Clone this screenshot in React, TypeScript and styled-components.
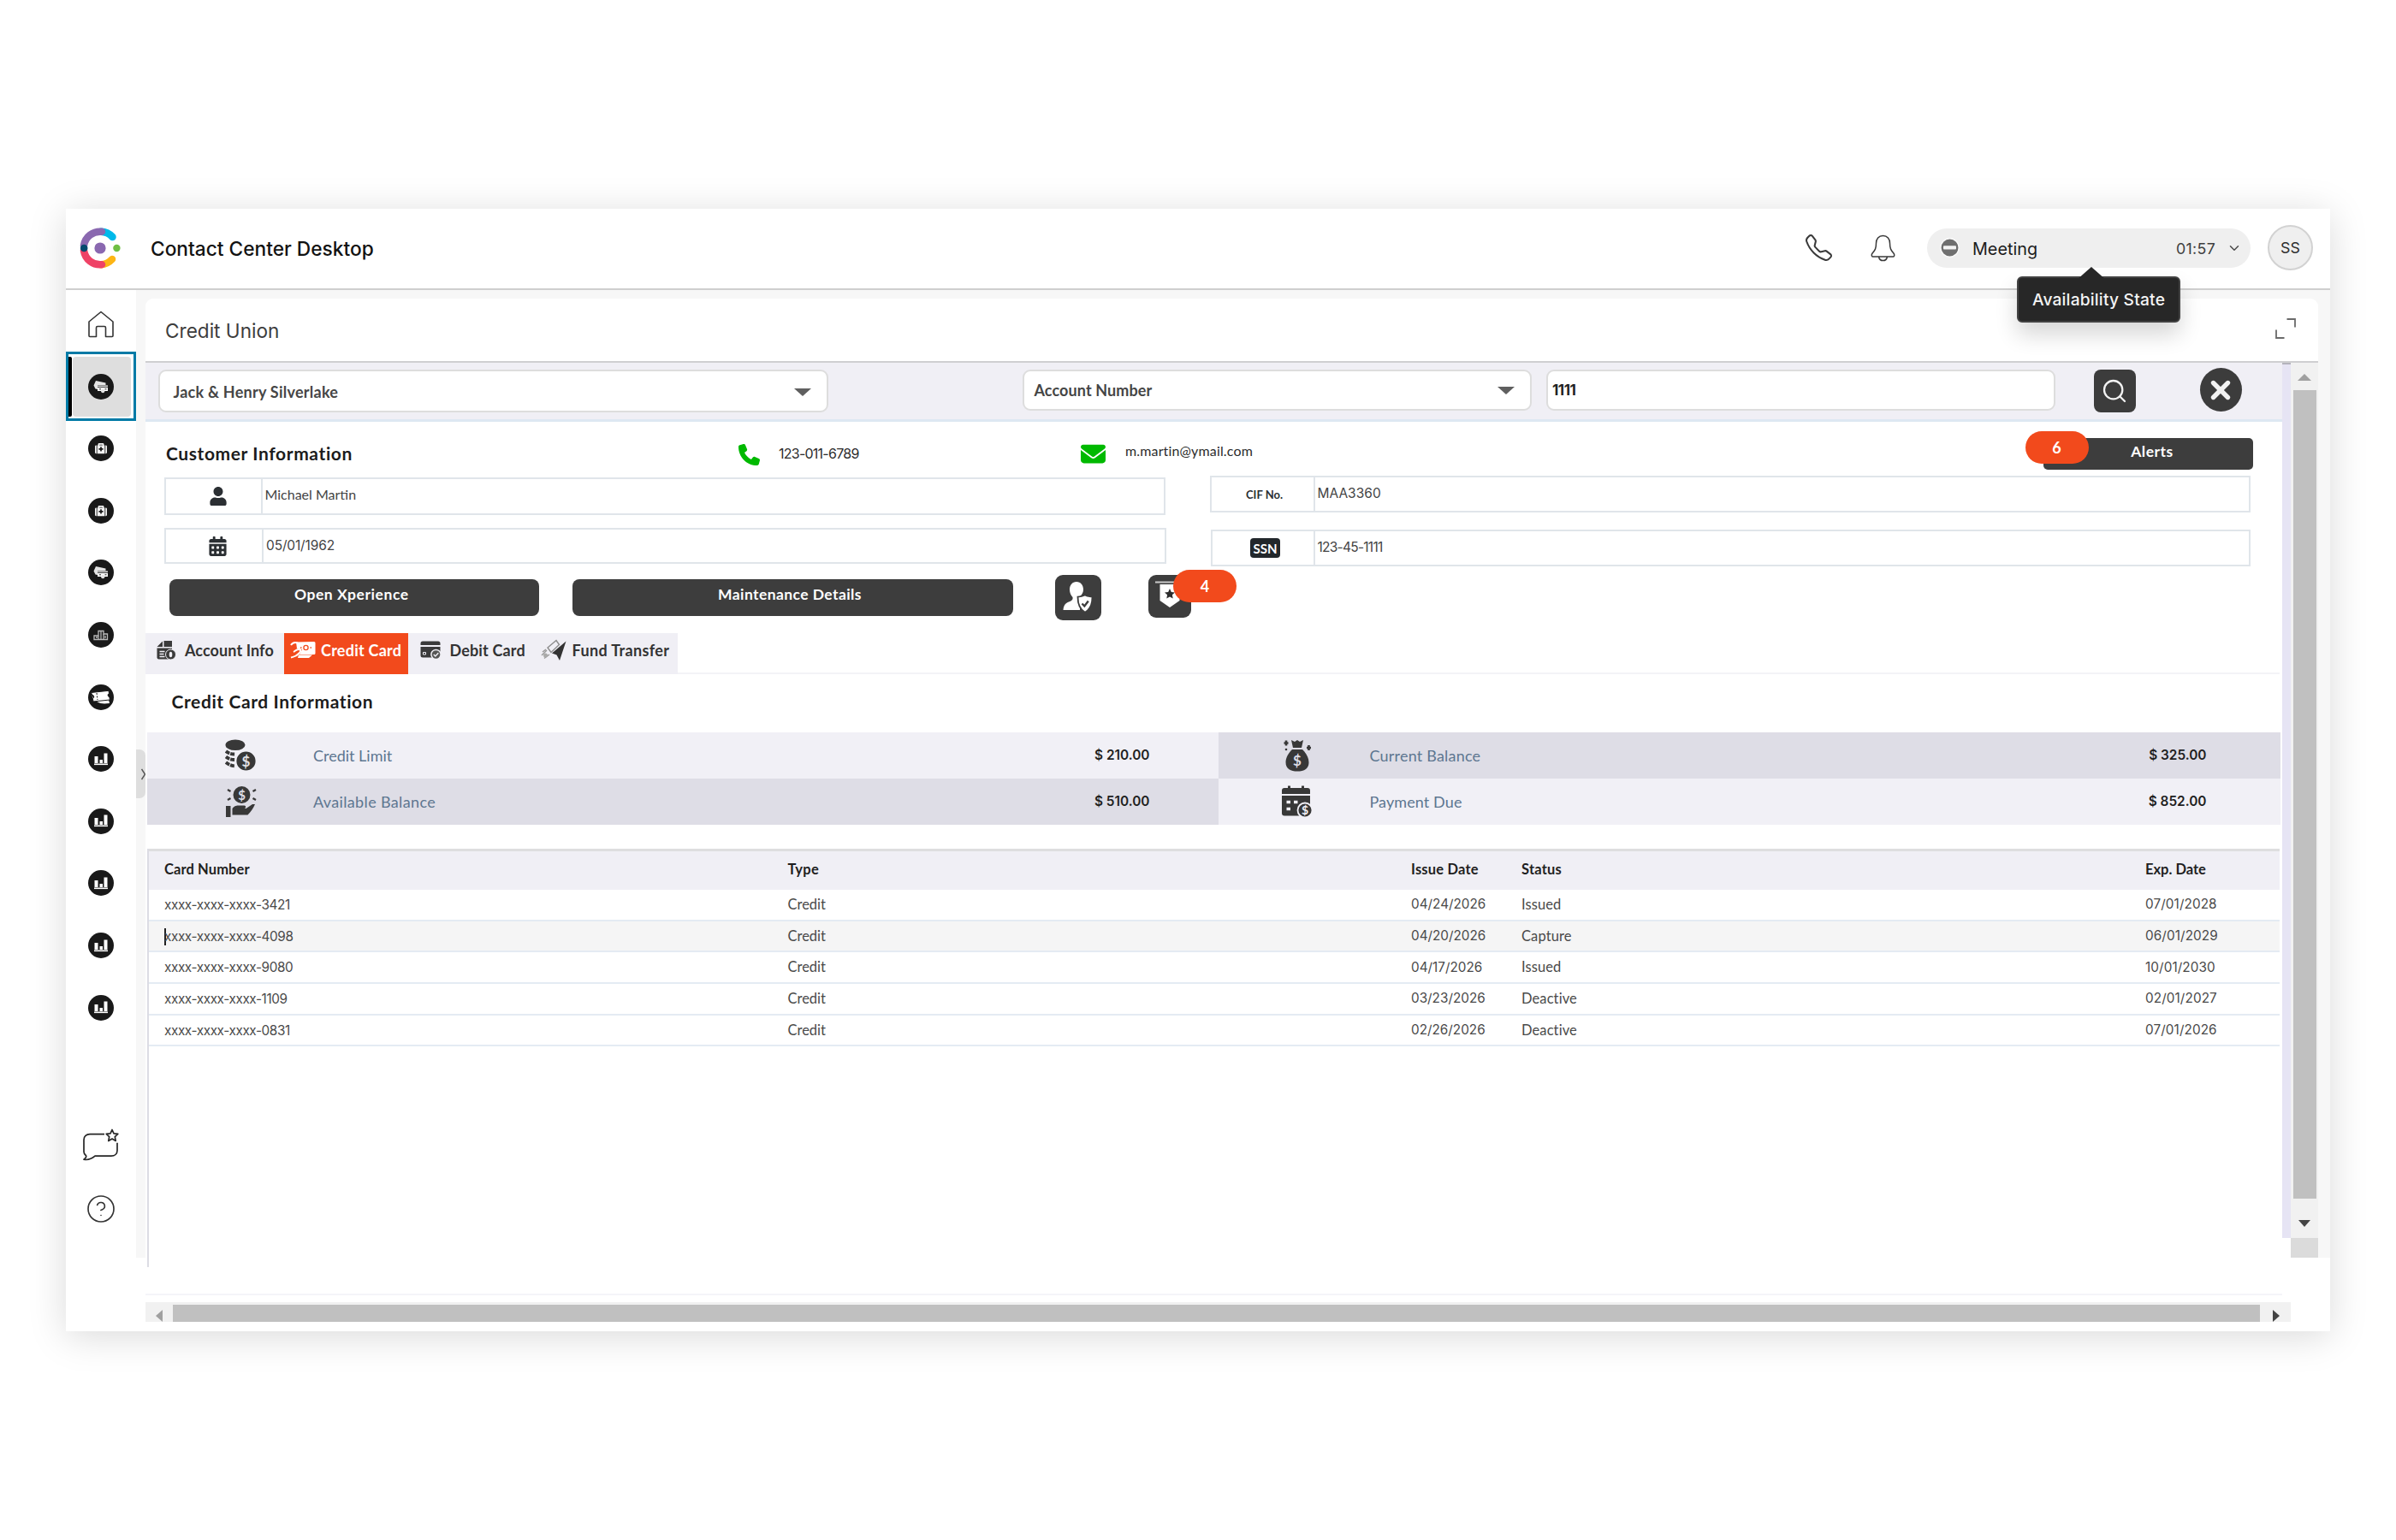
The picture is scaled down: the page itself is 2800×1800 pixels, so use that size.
import { Search, X, CircleHelp, ChevronDown } from 'lucide-react';
import { BsTelephone } from 'react-icons/bs';
import { FaMedkit, FaUser, FaCalendarAlt } from 'react-icons/fa';
import { FaEnvelope, FaPhone } from 'react-icons/fa6';
import styled, { createGlobalStyle } from 'styled-components';

const GlobalStyle = createGlobalStyle`
  * {
    box-sizing: border-box;
  }
  body {
    margin: 0;
    background: #ffffff;
    font-family: Lato, 'Liberation Sans', sans-serif;
    color: #3c3c3c;
  }
  svg {
    display: block;
    flex: none;
  }
`;

const Stage = styled.div`
  width: 2800px;
  height: 1800px;
  padding: 244px 77px;
  overflow: hidden;
`;

const Window = styled.div`
  width: 2646px;
  height: 1312px;
  display: flex;
  flex-direction: column;
  background: #ffffff;
  box-shadow: 0 6px 42px rgba(0, 0, 0, 0.15);
`;

const Label = styled.span<{ $track?: number }>`
  white-space: nowrap;
  letter-spacing: ${(props) => props.$track ?? 0}px;
`;

// Inter has a plain "1", so figures are set in it
const Figures = styled(Label)`
  font-family: Inter, 'Liberation Sans', sans-serif;
`;

/* ---------- top bar ---------- */

const TopBar = styled.header`
  height: 95px;
  flex: none;
  display: flex;
  align-items: center;
  padding: 0 20px 2px 16px;
  border-bottom: 2px solid #cfcfcf;
  font-family: Inter, 'Liberation Sans', sans-serif;
`;

const AppTitle = styled(Label)`
  margin-left: 35px;
  margin-right: auto;
  padding-top: 1px;
  font-size: 22.7px;
  font-weight: 500;
  color: #121212;
`;

const IconSlot = styled.div<{ $right: number }>`
  margin-right: ${(props) => props.$right}px;
  color: #3a3a3a;
`;

const StatePill = styled.div`
  position: relative;
  width: 378px;
  height: 46px;
  margin-right: 20px;
  padding: 0 10px 0 15px;
  display: flex;
  align-items: center;
  border-radius: 23px;
  background: #efefef;
`;

const StateName = styled(Label)`
  margin-left: 15px;
  margin-right: auto;
  padding-top: 2px;
  font-size: 19.8px;
  color: #1b1b1b;
`;

const StateTime = styled(Label)`
  margin-right: 13px;
  padding-top: 1px;
  font-size: 17.8px;
  color: #3f3f3f;
`;

const Avatar = styled.div`
  width: 53px;
  height: 53px;
  display: flex;
  align-items: center;
  justify-content: center;
  border: 2px solid #d2d2d2;
  border-radius: 50%;
  background: #efefef;
  font-size: 17.8px;
  color: #2e2e2e;
`;

const Tooltip = styled.div`
  position: absolute;
  top: 56px;
  left: 105px;
  z-index: 5;
  width: 191px;
  height: 54px;
  display: flex;
  align-items: center;
  justify-content: center;
  border: 2px solid #424242;
  border-radius: 6px;
  background: #272727;
  box-shadow: 0 14px 26px rgba(0, 0, 0, 0.16);
  font-size: 19.2px;
  font-weight: 500;
  color: #f4f4f4;
`;

const TooltipTip = styled.svg`
  position: absolute;
  top: -13px;
  left: 68px;
`;

/* ---------- side bar ---------- */

const Body = styled.div`
  flex: 1;
  display: flex;
  align-items: flex-start;
`;

const SideBar = styled.nav`
  width: 82px;
  height: 1217px;
  display: flex;
  flex-direction: column;
  align-items: center;
  padding-top: 24px;
`;

const HomeSlot = styled.div`
  height: 48px;
`;

const NavItem = styled.div`
  width: 82px;
  height: 72.6px;
  display: flex;
  align-items: center;
  justify-content: center;
`;

const SelectedItem = styled.div`
  width: 82px;
  height: 81px;
  margin-bottom: -4px;
  padding: 2px 3px 2px 0;
  display: flex;
  align-items: center;
  border: 3px solid #007aa6;
`;

const SelectedMark = styled.div`
  width: 4px;
  height: 70px;
  background: #000000;
  border-radius: 0 2px 2px 0;
`;

const SelectedTile = styled.div`
  width: 70px;
  height: 70px;
  margin-left: 1px;
  padding-right: 2px;
  display: flex;
  align-items: center;
  justify-content: center;
  border-radius: 4px;
  background: #dedede;
`;

const Bubble = styled.div`
  width: 30px;
  height: 30px;
  display: flex;
  align-items: center;
  justify-content: center;
  border-radius: 50%;
  background: #191919;
  color: #f3f3f3;
  font-size: 14px;
`;

const SideFooter = styled.div`
  margin-top: auto;
  margin-bottom: 125px;
  display: flex;
  flex-direction: column;
  align-items: center;
  gap: 36px;
`;

const Gutter = styled.div<{ $width: number }>`
  width: ${(props) => props.$width}px;
  height: 1131px;
  padding-top: 537px;
  background: #f7f7f7;
`;

const Handle = styled.div`
  height: 57px;
  display: flex;
  align-items: center;
  justify-content: flex-end;
  border-radius: 0 7px 7px 0;
  background: #dedede;
`;

/* ---------- panel ---------- */

const PanelWrap = styled.div`
  width: 2539px;
  padding-top: 10px;
  background: linear-gradient(#f7f7f7 24px, #ffffff 24px);
`;

const Panel = styled.section`
  display: flex;
  flex-direction: column;
  border-radius: 9px 9px 0 0;
  background: #ffffff;
`;

const PanelTitle = styled.div`
  height: 75px;
  padding: 0 25px 3px 23px;
  display: flex;
  align-items: center;
  justify-content: space-between;
  border-bottom: 2px solid #cfcfd1;
  font-family: Inter, 'Liberation Sans', sans-serif;
  font-size: 22.6px;
  color: #3d3d3d;
`;

const PanelName = styled(Label)`
  padding-top: 4px;
`;

const Frame = styled.div`
  display: flex;
`;

const Page = styled.div`
  width: 2497px;
  height: 1098px;
  display: flex;
  flex-direction: column;
`;

const Strip = styled.div`
  width: 10px;
  height: 1023px;
  background: #e6e4f4;
  border-top: 2px solid #b4b3bc;
`;

const VerticalScroll = styled.div`
  width: 32px;
  height: 1046px;
  padding-top: 13px;
  display: flex;
  flex-direction: column;
  align-items: center;
  background: #f1f1f1;
  border-bottom: 23px solid #dbdbdb;
`;

const VerticalThumb = styled.div`
  width: 27px;
  height: 945px;
  margin: 11px 0 25px;
  background: #c0c0c0;
`;

const HorizontalScroll = styled.div`
  width: 2507px;
  height: 23px;
  padding-left: 12px;
  display: flex;
  align-items: flex-end;
  background: #f1f1f1;
`;

const HorizontalThumb = styled.div`
  width: 2438.5px;
  height: 20px;
  margin: 0 15px 0 12px;
  background: #c0c0c0;
`;

/* ---------- search band ---------- */

const SearchBand = styled.div`
  height: 69px;
  padding: 8px 0 0 14.5px;
  display: flex;
  align-items: flex-start;
  background: #f0eff5;
  border-bottom: 3px solid #dde8f2;
`;

const Box = styled.div<{ $width: number; $height: number; $left: number }>`
  width: ${(props) => props.$width}px;
  height: ${(props) => props.$height}px;
  margin-left: ${(props) => props.$left}px;
  display: flex;
  align-items: center;
  justify-content: space-between;
  border: 2px solid #dddddd;
  border-radius: 9px;
  background: #ffffff;
  font-size: 18px;
  font-weight: 700;
  color: #454545;
`;

const SelectBox = styled(Box)`
  padding: 0 18px 0 12px;
`;

const WideSelectBox = styled(Box)`
  padding: 2px 18px 0 16px;
`;

const TextBox = styled(Box)`
  padding: 0 5px;
  font-size: 17px;
  color: #222222;
`;

const SquareButton = styled.div`
  width: 49px;
  height: 50px;
  margin-left: 44.5px;
  display: flex;
  align-items: center;
  justify-content: center;
  border-radius: 8px;
  background: #3c3c3c;
  color: #f2f2f2;
`;

const RoundButton = styled(SquareButton)`
  width: 49px;
  height: 51px;
  margin-left: 75px;
  margin-top: -2px;
  border-radius: 50%;
`;

/* ---------- customer ---------- */

const ContactRow = styled.div`
  height: 63px;
  padding: 0 34px 0 24px;
  display: grid;
  grid-template-columns: 669px 400px 1fr 267px;
  align-items: start;
`;

const Heading = styled(Label)`
  font-size: 21px;
  font-weight: 700;
  color: #1c1c1c;
`;

const CustomerHeading = styled(Heading)`
  padding-top: 24px;
`;

const Contact = styled.div<{ $top: number; $gap: number }>`
  padding-top: ${(props) => props.$top}px;
  display: flex;
  align-items: flex-start;
  gap: ${(props) => props.$gap}px;
  font-size: 16px;
  line-height: 22px;
  color: #2c2c2c;
  svg {
    color: #00b900;
  }
`;

const AlertsButton = styled.div`
  position: relative;
  width: 245px;
  height: 37px;
  margin-top: 19px;
  margin-left: 22px;
  padding: 0 0 7px 9px;
  display: flex;
  align-items: center;
  justify-content: center;
  border-radius: 5px;
  background: #3d3d3d;
  color: #ffffff;
  font-size: 17.5px;
  font-weight: 700;
`;

const CountBadge = styled.div<{ $left: number; $top: number }>`
  position: absolute;
  left: ${(props) => props.$left}px;
  top: ${(props) => props.$top}px;
  width: 74px;
  height: 38px;
  display: flex;
  align-items: center;
  justify-content: center;
  border-radius: 19px;
  background: #f24a1c;
  color: #ffffff;
  font-size: 18px;
  font-weight: 700;
`;

const Fields = styled.div`
  height: 116px;
  padding-left: 22px;
  display: flex;
  gap: 50.5px;
`;

const FieldColumn = styled.div<{ $top: number; $gap: number; $align?: string }>`
  padding-top: ${(props) => props.$top}px;
  display: flex;
  flex-direction: column;
  align-items: ${(props) => props.$align ?? 'flex-end'};
  gap: ${(props) => props.$gap}px;
`;

const Field = styled.div<{ $width: number; $height: number }>`
  width: ${(props) => props.$width}px;
  height: ${(props) => props.$height}px;
  display: flex;
  border: 2px solid #e0e5ea;
`;

const FieldIcon = styled.div<{ $width: number; $left: number }>`
  width: ${(props) => props.$width}px;
  padding-left: ${(props) => props.$left}px;
  display: flex;
  align-items: center;
  border-right: 2px solid #e0e5ea;
  color: #2b2f33;
  font-size: 13px;
  font-weight: 700;
`;

const FieldValue = styled(Label)`
  padding: 0 0 5px 3px;
  align-self: center;
  font-size: 16px;
  color: #444444;
`;

const FieldFigures = styled(FieldValue)`
  padding-bottom: 2px;
  font-family: Inter, 'Liberation Sans', sans-serif;
  font-size: 15.5px;
`;

const SsnBadge = styled.div`
  width: 35px;
  height: 23px;
  display: flex;
  align-items: center;
  justify-content: center;
  border-radius: 4px;
  background: #22272b;
  color: #ffffff;
  font-size: 15px;
`;

const Actions = styled.div`
  height: 68px;
  padding-left: 27.5px;
  display: flex;
  align-items: flex-start;
`;

const ActionButton = styled.div<{ $width: number; $right: number }>`
  width: ${(props) => props.$width}px;
  height: 43px;
  margin: 5px ${(props) => props.$right}px 0 0;
  padding: 0 6px 8px 0;
  display: flex;
  align-items: center;
  justify-content: center;
  border-radius: 8px;
  background: #3d3d3d;
  color: #ffffff;
  font-size: 17.5px;
  font-weight: 700;
`;

const IconButton = styled.div<{ $width: number; $height: number }>`
  position: relative;
  width: ${(props) => props.$width}px;
  height: ${(props) => props.$height}px;
  margin-right: 54.5px;
  padding-bottom: 2px;
  display: flex;
  align-items: center;
  justify-content: center;
  border-radius: 9px;
  background: #3d3d3d;
`;

/* ---------- tabs ---------- */

const Tabs = styled.div`
  height: 48px;
  display: flex;
  margin-right: 3px;
  border-bottom: 2px solid #f3f3f7;
`;

const Tab = styled.div<{ $active?: boolean; $width: number; $left: number; $gap: number }>`
  width: ${(props) => props.$width}px;
  height: 48px;
  padding: 0 0 9px ${(props) => props.$left}px;
  display: flex;
  align-items: center;
  gap: ${(props) => props.$gap}px;
  background: ${(props) => (props.$active ? '#f24a1c' : '#f0eff5')};
  color: ${(props) => (props.$active ? '#ffffff' : '#333333')};
  font-size: 18px;
  font-weight: 700;
`;

const CardHeading = styled(Heading)`
  height: 68px;
  padding-left: 30.5px;
  line-height: 64px;
`;

/* ---------- summary ---------- */

const Summary = styled.div`
  width: 2493px;
  margin: 0 0 28px 1.5px;
  display: grid;
  grid-template-columns: 1252px 1241px;
  grid-template-rows: 54px 54px;
`;

const SummaryCell = styled.div<{ $dark?: boolean; $side: 'left' | 'right' }>`
  padding-right: ${(props) => (props.$side === 'left' ? 80 : 86)}px;
  display: grid;
  grid-template-columns: ${(props) => (props.$side === 'left' ? '91px 103.5px' : '73px 104px')} 1fr auto;
  align-items: center;
  background: ${(props) => (props.$dark ? '#dedde6' : '#f1f0f6')};
`;

const SummaryLabel = styled(Label)`
  grid-column: 3;
  font-size: 18px;
  color: #5d7690;
`;

const SummaryIcon = styled.div`
  grid-column: 2;
`;

const SummaryValue = styled(Figures)`
  padding-bottom: 2px;
  font-size: 15.4px;
  font-weight: 600;
  color: #1f1f1f;
`;

/* ---------- table ---------- */

const Table = styled.div`
  width: 2492px;
  height: 489px;
  margin-left: 2px;
  border-left: 2px solid #dcdce4;
`;

const TableRow = styled.div<{ $hover?: boolean }>`
  height: 36.7px;
  padding: 0 0 1px 18px;
  display: grid;
  grid-template-columns: 728.5px 728.5px 129px 729px 1fr;
  align-items: center;
  border-bottom: 2px solid #e4ebf3;
  background: ${(props) => (props.$hover ? '#f5f5f5' : '#ffffff')};
  font-size: 16.5px;
  color: #4a4a4a;
`;

const TableHead = styled(TableRow)`
  height: 48px;
  padding-bottom: 4px;
  border-top: 3px solid #dededf;
  border-bottom: none;
  background: #f0eff5;
  font-weight: 700;
  color: #1f1f1f;
`;

const RowFigures = styled(Figures)`
  font-size: 15.3px;
`;

const Caret = styled.span`
  display: inline-block;
  width: 2px;
  height: 20px;
  margin: 0 -2px -5px 0;
  background: #222222;
`;

const Rule = styled.div`
  height: 2px;
  margin-top: 31px;
  background: #f4f4f9;
`;

/* ---------- drawings ---------- */

const Triangle = ({ w, h, points, fill }: { w: number; h: number; points: string; fill: string }) => (
  <svg width={w} height={h}>
    <polygon points={points} fill={fill} />
  </svg>
);

const Logo = () => (
  <svg width="48" height="48" viewBox="0 0 48 48" fill="none" strokeWidth="8.5" strokeLinecap="round">
    <path d="M25 4.8A19.2 19.2 0 0 1 38.5 11" stroke="#00b9ea" />
    <path d="M25 43.2A19.2 19.2 0 0 0 38 37" stroke="#fdb515" />
    <path d="M5 27A19.2 19.2 0 0 0 26 43.2" stroke="#ef4266" />
    <path d="M5 21A19.2 19.2 0 0 1 26 4.8" stroke="#8a68b0" />
    <circle cx="5.2" cy="24" r="4.3" fill="#04496e" />
    <circle cx="43.4" cy="24" r="4.2" fill="#6fbf44" />
    <circle cx="24" cy="24" r="6.6" fill="#8a68b0" />
  </svg>
);

const BellIcon = () => (
  <svg width="31" height="32" viewBox="0 0 31 32" fill="none" stroke="currentColor" strokeWidth="1.5" strokeLinejoin="round">
    <path d="M15.5 1.5c-5 0-8 3.8-8 8.8 0 6.2-1.2 8-4.6 12-.9 1.2-.9 3.7.6 3.7h24c1.5 0 1.5-2.5.6-3.7-3.4-4-4.6-5.8-4.6-12 0-5-3-8.8-8-8.8z" />
    <path d="M10.5 26c.6 3 2.6 4.6 5 4.6s4.4-1.6 5-4.6" />
  </svg>
);

const HomeIcon = () => (
  <svg width="32" height="32" viewBox="0 0 32 32" fill="none" stroke="#333" strokeWidth="1.6" strokeLinejoin="round">
    <path d="M16 1.5L30 13v16.5a1 1 0 0 1-1 1h-7.5V20a1.5 1.5 0 0 0-1.5-1.5h-8a1.5 1.5 0 0 0-1.5 1.5v10.5H3a1 1 0 0 1-1-1V13z" />
  </svg>
);

const MinusIcon = () => (
  <svg width="23" height="23" viewBox="0 0 23 23">
    <circle cx="11.5" cy="11.5" r="10.7" fill="#707070" stroke="#fafafa" strokeWidth="1.5" />
    <rect x="4" y="9.3" width="15" height="4.2" rx="1" fill="#f4f4f4" />
  </svg>
);

const ExpandIcon = () => (
  <svg width="26" height="26" viewBox="0 0 26 26" fill="none" stroke="#6a6a6a" strokeWidth="1.8">
    <path d="M14.5 2H24v9.5M2 14.5V24h9.5" />
  </svg>
);

const FeedbackIcon = () => (
  <svg width="44" height="40" viewBox="0 0 44 40" fill="none" stroke="#262626" strokeWidth="1.7" strokeLinejoin="round">
    <path d="M26 6.7H9c-4 0-7 2.5-7 6.5v14c0 2 1.300 3.600 2.500 4.500.8 1.500-.4 3-2.500 4.500 5 1 9-.5 13-4h19c4 0 7-2.500 7-6.500v-9" />
    <path d="M35 1.500l2 4.300 4.800.6-3.500 3.300.9 4.800-4.200-2.400-4.200 2.400.9-4.800-3.500-3.300 4.800-.6z" />
  </svg>
);

const CardsGlyph = () => (
  <svg width="20" height="18" viewBox="0 0 20 18">
    <path d="M1.500 7.500L4 2l11.500 2.500V7H6v5l-2.500-.5z" fill="#e4e4e4" />
    <path d="M6 7.500h12v6.500H6z" fill="#ffffff" />
    <path d="M6 9.300h12M8 11.800h2M14.500 11.800h2" stroke="#191919" strokeWidth="1" />
    <circle cx="12.2" cy="14.2" r="2.100" fill="#e4e4e4" />
  </svg>
);

const PodiumGlyph = () => (
  <svg width="19" height="14" viewBox="0 0 19 14" fill="none" stroke="#b9b9b9" strokeWidth="1.3">
    <path d="M1 12.5V8h5V2.500h6V6h4.500v6.500z" />
    <path d="M6 8v4M9 3v9M12 6v6M3 10h2M14 8v3" />
  </svg>
);

const TicketGlyph = () => (
  <svg width="26" height="22" viewBox="0 0 26 22">
    <path d="M2 8c5 11 12 11 21 10l-1-4-18-1z" fill="#fff" />
    <path d="M1.500 5.500L22 3.300l.5 3.200a2.200 2.200 0 0 0 .4 4.200l.5 3.300L4 16l-.6-3.500a2.200 2.200 0 0 0-.7-4.200z" fill="#fff" stroke="#191919" strokeWidth="1" />
    <path d="M8 6l1 8" stroke="#191919" strokeDasharray="2 1.5" />
  </svg>
);

const ChartGlyph = () => (
  <svg width="18" height="17" viewBox="0 0 18 17" fill="#fff">
    <rect x="1.5" y="5" width="4" height="8" />
    <rect x="7.5" y="9" width="3.5" height="4" />
    <rect x="12.5" y="1.5" width="4" height="11.5" />
    <rect x="1" y="13.5" width="16" height="1.6" />
  </svg>
);

const UserShieldIcon = () => (
  <svg width="36" height="42" viewBox="0 0 36 42">
    <path d="M16 3c-5 0-8 4-8 9 0 4 1.500 7 3.500 9 .5 3-1 4-4.500 5.500C3.500 28 1 30 .5 36H20V20c2.500-2 4-4.500 4-8 0-5-3-9-8-9z" fill="#fff" />
    <path d="M26 18.500c3 1.500 5.500 2 8.500 2.200 0 8-1.500 14-8.500 18-7-4-8.500-10-8.500-18 3-.2 5.500-.7 8.500-2.200z" fill="#fff" stroke="#3d3d3d" strokeWidth="1.8" />
    <path d="M22.500 28.500l2.800 3 4.500-6" fill="none" stroke="#3d3d3d" strokeWidth="2.4" />
  </svg>
);

const PennantIcon = () => (
  <svg width="36" height="42" viewBox="0 0 36 42">
    <path d="M1 5.500h34" stroke="#c9c9c9" strokeWidth="2" />
    <path d="M6.500 8h23v19L18 35 6.500 27z" fill="#fff" />
    <path d="M18 13l1.800 3.900 4.200.5-3.100 2.900.8 4.200-3.700-2.100-3.700 2.100.8-4.200-3.100-2.900 4.200-.5z" fill="#2d2d2d" />
  </svg>
);

const AccountIcon = () => (
  <svg width="24" height="24" viewBox="0 0 24 24" fill="#3a3a3a">
    <path d="M1.500 8L8 1.500V8zM9.500 1h9.500v7H9.500z" />
    <path d="M1.500 9.500H19V22.500H3.500a2 2 0 0 1-2-2z" />
    <path d="M4.500 13.500h6M4.500 16.500h5M4.500 19.500h6" stroke="#f0eff5" strokeWidth="1.3" />
    <circle cx="17.5" cy="17" r="6" stroke="#f0eff5" strokeWidth="1" />
    <ellipse cx="17.5" cy="17" rx="1.8" ry="3.2" fill="#f0eff5" />
  </svg>
);

const CashIcon = () => (
  <svg width="30" height="24" viewBox="0 0 30 24">
    <path d="M7 2.500L28 2a1.500 1.500 0 0 1 1.500 1.500v12A1.500 1.500 0 0 1 28 17H11l3-6-6-1z" fill="#fff" />
    <path d="M1 6C3 2.500 6 2.500 9 3.500M1 20.500c4-1 6-1 9-4.500 3-3 3-5 0-5s-4 2-6 3" fill="none" stroke="#fff" strokeWidth="2" />
    <path d="M10 17.500h16l-4 3.500H9z" fill="#fff" />
    <circle cx="18.5" cy="9" r="2.6" fill="none" stroke="#f24a1c" strokeWidth="1.3" />
    <path d="M12 9h1.500M23.500 9H25" stroke="#f24a1c" strokeWidth="1.6" />
  </svg>
);

const DebitIcon = () => (
  <svg width="25" height="24" viewBox="0 0 25 24">
    <path d="M3 1.500h18A2.500 2.500 0 0 1 23.500 4v2H.5V4A2.500 2.500 0 0 1 3 1.500zM.5 8h23v10a2.500 2.500 0 0 1-2.500 2.500H3A2.500 2.500 0 0 1 .5 18z" fill="#3a3a3a" />
    <path d="M3.500 14.500h3V17h-3z" stroke="#f0eff5" strokeWidth="1" fill="none" />
    <circle cx="18.5" cy="17" r="5.6" fill="#555" stroke="#f0eff5" strokeWidth="1.5" />
    <path d="M15.800 17l2 2 3.500-3.700" fill="none" stroke="#f0eff5" strokeWidth="1.5" />
  </svg>
);

const TransferIcon = () => (
  <svg width="31" height="26" viewBox="0 0 31 26">
    <path d="M29.500 2.500L13 16.500l5.500 2 3.500 6.500z" fill="#333" />
    <path d="M8 10l10-8.500 3.500 5L12 15.500z" fill="none" stroke="#8c8c8c" strokeWidth="1.4" />
    <path d="M1 19l6-6M4 22.500l6-4.500M2 15l4-3" stroke="#999" strokeWidth="1.4" />
    <circle cx="5.5" cy="19" r="2.5" fill="#aaa" />
  </svg>
);

const Dollar = ({ x, y, size, fill }: { x: number; y: number; size: number; fill: string }) => (
  <text x={x} y={y} fontSize={size} fill={fill} fontFamily="Lato, sans-serif" fontWeight="700" textAnchor="middle">
    $
  </text>
);

const CoinsIcon = () => (
  <svg width="37" height="38" viewBox="0 0 37 38">
    <ellipse cx="12" cy="6.8" rx="11.5" ry="6.3" fill="#383838" />
    <path d="M1 14c3 2.500 6 3.500 11 3.500M1 20.500c3 2.500 6 3.500 11 3.500M1 27c3 2.500 6 4 11 4.500" fill="none" stroke="#383838" strokeWidth="3.8" strokeDasharray="5 1" />
    <circle cx="24.5" cy="25.5" r="12" fill="#383838" stroke="#f1f0f6" strokeWidth="1.8" />
    <Dollar x={24.5} y={31.5} size={17} fill="#e4e4e8" />
  </svg>
);

const HandIcon = () => (
  <svg width="37" height="38" viewBox="0 0 37 38">
    <circle cx="19.5" cy="11" r="10" fill="#383838" />
    <Dollar x={19.5} y={16.5} size={15} fill="#dedde6" />
    <path d="M3 5l3.500 2M3 17l3.500-2M36 5l-3.500 2M36 17l-3.500-2" stroke="#383838" strokeWidth="2.2" />
    <rect x="1" y="24" width="5.5" height="13" fill="#383838" />
    <path d="M8.500 27c3-3.500 5-3.500 8-3.500h6c2 0 2.500 3 0 3.500h2L32 22h3c-2 5-5 9-8.500 12.500h-18z" fill="#383838" />
  </svg>
);

const BagIcon = () => (
  <svg width="37" height="38" viewBox="0 0 37 38">
    <path d="M12 1l4 2 3-2 3 2 4-2-2 9H14z" fill="#383838" />
    <path d="M13 12h12c4 4 7.500 9 7.500 15 0 8-6 10.500-13.500 10.500S5.500 35 5.500 27c0-6 3.500-11 7.500-15z" fill="#383838" />
    <path d="M6 1.500v6M3.500 4.500h5M32.500 7v6M30 10h5" stroke="#383838" strokeWidth="2.6" />
    <circle cx="6" cy="12" r="1.3" fill="#383838" />
    <Dollar x={19} y={31} size={17} fill="#dedde6" />
  </svg>
);

const DueIcon = () => (
  <svg width="37" height="38" viewBox="0 0 37 38">
    <path d="M1 10V6a3 3 0 0 1 3-3h4V.5h3V3h13V.5h3V3h4a3 3 0 0 1 3 3v4z" fill="#383838" />
    <path d="M1 12h33v21.500a2 2 0 0 1-2 2H4a3 3 0 0 1-3-3z" fill="#383838" />
    <path d="M6.500 19.500H11M15 19.500h4.500M6.500 27.500H11" stroke="#f1f0f6" strokeWidth="3.6" />
    <circle cx="28" cy="29" r="8.5" fill="#383838" stroke="#f1f0f6" strokeWidth="1.8" />
    <Dollar x={28} y={34} size={14} fill="#f1f0f6" />
  </svg>
);

/* ---------- data ---------- */

const navGlyphs = [
  <FaMedkit />,
  <FaMedkit />,
  <CardsGlyph />,
  <PodiumGlyph />,
  <TicketGlyph />,
  <ChartGlyph />,
  <ChartGlyph />,
  <ChartGlyph />,
  <ChartGlyph />,
  <ChartGlyph />,
];

interface CardRow {
  number: string;
  issued: string;
  status: string;
  expires: string;
}

const cards: CardRow[] = [
  { number: 'xxxx-xxxx-xxxx-3421', issued: '04/24/2026', status: 'Issued', expires: '07/01/2028' },
  { number: 'xxxx-xxxx-xxxx-4098', issued: '04/20/2026', status: 'Capture', expires: '06/01/2029' },
  { number: 'xxxx-xxxx-xxxx-9080', issued: '04/17/2026', status: 'Issued', expires: '10/01/2030' },
  { number: 'xxxx-xxxx-xxxx-1109', issued: '03/23/2026', status: 'Deactive', expires: '02/01/2027' },
  { number: 'xxxx-xxxx-xxxx-0831', issued: '02/26/2026', status: 'Deactive', expires: '07/01/2026' },
];

function App() {
  return (
    <Stage>
      <GlobalStyle />
      <Window>
        <TopBar>
          <Logo />
          <AppTitle>Contact Center Desktop</AppTitle>
          <IconSlot $right={44}>
            <BsTelephone size={31} />
          </IconSlot>
          <IconSlot $right={36}>
            <BellIcon />
          </IconSlot>
          <StatePill>
            <MinusIcon />
            <StateName>Meeting</StateName>
            <StateTime $track={0.3}>01:57</StateTime>
            <ChevronDown size={18} strokeWidth={2} color="#4a4a4a" />
            <Tooltip>
              <TooltipTip width="34" height="15">
                <path d="M0 15L17 0l17 15z" fill="#272727" />
              </TooltipTip>
              <Label $track={0.2}>Availability State</Label>
            </Tooltip>
          </StatePill>
          <Avatar>
            <Label>SS</Label>
          </Avatar>
        </TopBar>
        <Body>
          <SideBar>
            <HomeSlot>
              <HomeIcon />
            </HomeSlot>
            <SelectedItem>
              <SelectedMark />
              <SelectedTile>
                <Bubble>
                  <CardsGlyph />
                </Bubble>
              </SelectedTile>
            </SelectedItem>
            {navGlyphs.map((glyph, i) => (
              <NavItem key={i}>
                <Bubble>{glyph}</Bubble>
              </NavItem>
            ))}
            <SideFooter>
              <FeedbackIcon />
              <CircleHelp size={36} strokeWidth={1.1} color="#333" />
            </SideFooter>
          </SideBar>
          <Gutter $width={11}>
            <Handle>
              <svg width="5" height="14" fill="none" stroke="#555" strokeWidth="1.5">
                <path d="M.5 1l4 6-4 6" />
              </svg>
            </Handle>
          </Gutter>
          <PanelWrap>
            <Panel>
              <PanelTitle>
                <PanelName>Credit Union</PanelName>
                <ExpandIcon />
              </PanelTitle>
              <Frame>
                <Page>
                  <SearchBand>
                    <WideSelectBox $width={783} $height={50} $left={0}>
                      <Label $track={0.25}>Jack &amp; Henry Silverlake</Label>
                      <Triangle w={20} h={9} points="0,0 20,0 10,9" fill="#5f5f5f" />
                    </WideSelectBox>
                    <SelectBox $width={595} $height={48} $left={227}>
                      <Label $track={0.1}>Account Number</Label>
                      <Triangle w={20} h={9} points="0,0 20,0 10,9" fill="#5f5f5f" />
                    </SelectBox>
                    <TextBox $width={595} $height={48} $left={17.5}>
                      <Figures $track={-0.5}>1111</Figures>
                    </TextBox>
                    <SquareButton>
                      <Search size={32} strokeWidth={1.7} />
                    </SquareButton>
                    <RoundButton>
                      <X size={34} strokeWidth={3.8} />
                    </RoundButton>
                  </SearchBand>
                  <ContactRow>
                    <CustomerHeading $track={0.6}>Customer Information</CustomerHeading>
                    <Contact $top={26} $gap={22}>
                      <FaPhone size={25} />
                      <Figures $track={-0.75}>123-011-6789</Figures>
                    </Contact>
                    <Contact $top={23} $gap={23}>
                      <FaEnvelope size={29} />
                      <Label $track={0.15}>m.martin@ymail.com</Label>
                    </Contact>
                    <AlertsButton>
                      <Label $track={0.5}>Alerts</Label>
                      <CountBadge $left={-21.5} $top={-8}>
                        6
                      </CountBadge>
                    </AlertsButton>
                  </ContactRow>
                  <Fields>
                    <FieldColumn $top={2} $gap={15} $align="flex-start">
                      <Field $width={1170} $height={44}>
                        <FieldIcon $width={112.5} $left={50}>
                          <FaUser size={22} />
                        </FieldIcon>
                        <FieldValue>Michael Martin</FieldValue>
                      </Field>
                      <Field $width={1171} $height={42}>
                        <FieldIcon $width={114} $left={48.5}>
                          <FaCalendarAlt size={23} />
                        </FieldIcon>
                        <FieldFigures $track={-0.15}>05/01/1962</FieldFigures>
                      </Field>
                    </FieldColumn>
                    <FieldColumn $top={0} $gap={20}>
                      <Field $width={1216} $height={43}>
                        <FieldIcon $width={121} $left={40.5}>
                          <Label>CIF No.</Label>
                        </FieldIcon>
                        <FieldFigures>MAA3360</FieldFigures>
                      </Field>
                      <Field $width={1214.5} $height={43}>
                        <FieldIcon $width={119.5} $left={44}>
                          <SsnBadge>
                            <Label>SSN</Label>
                          </SsnBadge>
                        </FieldIcon>
                        <FieldFigures $track={-0.75}>123-45-1111</FieldFigures>
                      </Field>
                    </FieldColumn>
                  </Fields>
                  <Actions>
                    <ActionButton $width={432.5} $right={38.5}>
                      <Label $track={0.55}>Open Xperience</Label>
                    </ActionButton>
                    <ActionButton $width={515} $right={49.5}>
                      <Label $track={0.42}>Maintenance Details</Label>
                    </ActionButton>
                    <IconButton $width={54} $height={53}>
                      <UserShieldIcon />
                    </IconButton>
                    <IconButton $width={50} $height={50}>
                      <PennantIcon />
                      <CountBadge $left={29.5} $top={-6}>
                        4
                      </CountBadge>
                    </IconButton>
                  </Actions>
                  <Tabs>
                    <Tab $width={162} $left={12} $gap={10}>
                      <AccountIcon />
                      <Label $track={0.1}>Account Info</Label>
                    </Tab>
                    <Tab $active $width={145} $left={7} $gap={6}>
                      <CashIcon />
                      <Label $track={0.25}>Credit Card</Label>
                    </Tab>
                    <Tab $width={145} $left={13.5} $gap={10}>
                      <DebitIcon />
                      <Label $track={0.15}>Debit Card</Label>
                    </Tab>
                    <Tab $width={170} $left={9.5} $gap={6}>
                      <TransferIcon />
                      <Label $track={0.35}>Fund Transfer</Label>
                    </Tab>
                  </Tabs>
                  <CardHeading $track={0.6}>Credit Card Information</CardHeading>
                  <Summary>
                    <SummaryCell $side="left">
                      <SummaryIcon>
                        <CoinsIcon />
                      </SummaryIcon>
                      <SummaryLabel>Credit Limit</SummaryLabel>
                      <SummaryValue>$ 210.00</SummaryValue>
                    </SummaryCell>
                    <SummaryCell $dark $side="right">
                      <SummaryIcon>
                        <BagIcon />
                      </SummaryIcon>
                      <SummaryLabel $track={0.2}>Current Balance</SummaryLabel>
                      <SummaryValue>$ 325.00</SummaryValue>
                    </SummaryCell>
                    <SummaryCell $dark $side="left">
                      <SummaryIcon>
                        <HandIcon />
                      </SummaryIcon>
                      <SummaryLabel $track={0.35}>Available Balance</SummaryLabel>
                      <SummaryValue>$ 510.00</SummaryValue>
                    </SummaryCell>
                    <SummaryCell $side="right">
                      <SummaryIcon>
                        <DueIcon />
                      </SummaryIcon>
                      <SummaryLabel $track={0.1}>Payment Due</SummaryLabel>
                      <SummaryValue>$ 852.00</SummaryValue>
                    </SummaryCell>
                  </Summary>
                  <Table>
                    <TableHead>
                      <Label $track={0.1}>Card Number</Label>
                      <Label $track={0.3}>Type</Label>
                      <Label $track={0.2}>Issue Date</Label>
                      <Label $track={0.2}>Status</Label>
                      <Label>Exp. Date</Label>
                    </TableHead>
                    {cards.map((card, i) => (
                      <TableRow key={card.number} $hover={i === 1}>
                        <span>
                          {i === 1 && <Caret />}
                          <RowFigures $track={-0.4}>{card.number}</RowFigures>
                        </span>
                        <Label>Credit</Label>
                        <RowFigures>{card.issued}</RowFigures>
                        <Label $track={0.1}>{card.status}</Label>
                        <RowFigures $track={0.1}>{card.expires}</RowFigures>
                      </TableRow>
                    ))}
                  </Table>
                  <Rule />
                </Page>
                <Strip />
                <VerticalScroll>
                  <Triangle w={16} h={8} points="0,8 16,8 8,0" fill="#a0a0a0" />
                  <VerticalThumb />
                  <Triangle w={14} h={8} points="0,0 14,0 7,8" fill="#444444" />
                </VerticalScroll>
              </Frame>
              <HorizontalScroll>
                <Triangle w={8} h={14} points="8,0 8,14 0,7" fill="#a0a0a0" />
                <HorizontalThumb />
                <Triangle w={8} h={14} points="0,0 0,14 8,7" fill="#444444" />
              </HorizontalScroll>
            </Panel>
          </PanelWrap>
          <Gutter $width={14} />
        </Body>
      </Window>
    </Stage>
  );
}

export default App;
